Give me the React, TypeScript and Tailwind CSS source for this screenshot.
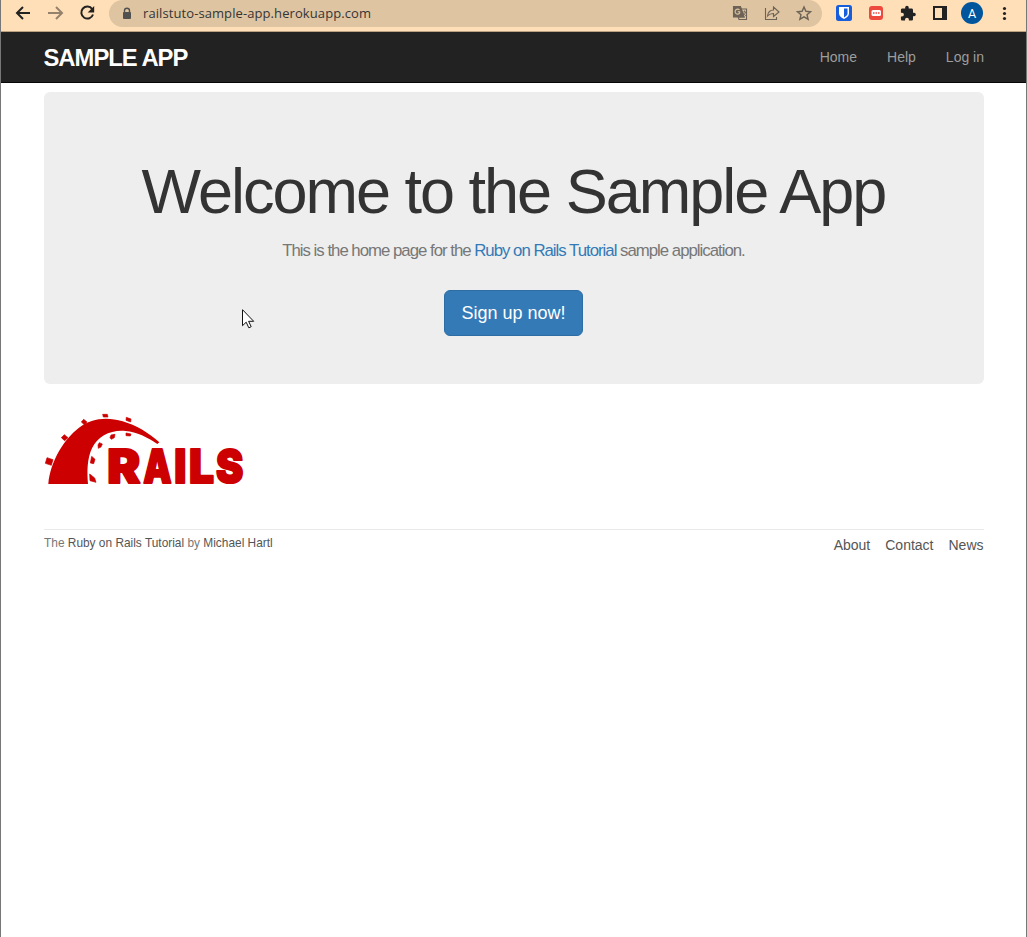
import React from "react";

function BrowserBar() {
  return (
    <div className="flex h-8 shrink-0 items-start border-b border-[#b8a080] bg-[#ffdfb8]">
      <svg width="108" height="28" viewBox="1 0 108 28" fill="none" strokeWidth="2">
        <path d="M30 13H17M23 7l-6 6 6 6" stroke="#222" />
        <path d="M48 13h13.500M56 7l6 6-6 6" stroke="#94826d" />
        <path d="M92.200 9.100a6 6 0 1 0 .8 5.400" stroke="#222" />
        <path d="M94.200 6v6.500h-6.500z" fill="#222" />
      </svg>
      <div className="flex h-[27px] w-[713px] items-center rounded-r-full rounded-bl-full rounded-tl-full bg-[#dfc4a1]">
        <svg className="ml-3" width="12" height="14" viewBox="0 0 12 14">
          <path d="M3.500 6V3.800a2.500 2.500 0 0 1 5 0V6" fill="none" stroke="#50504f" strokeWidth="1.400" />
          <rect x="2" y="5" width="8" height="7" rx="1" fill="#50504f" />
        </svg>
        <span className="ml-[10px] whitespace-nowrap font-['Open_Sans','Noto_Sans',sans-serif] text-[13px] leading-[26px] text-[#333]">
          <svg width="229" height="20" className="block">
            <text x="0" y="14" textLength="228" fill="#353535">railstuto-sample-app.herokuapp.com</text>
          </svg>
        </span>
        <svg className="ml-auto" width="90" height="27" viewBox="732 0 90 27" fill="none" stroke="#6c6256" strokeWidth="1.100">
          <path d="M733.500 6.500h7l3.500 10.500h-10.500z" fill="#6c6256" />
          <path d="M741 9h5.500v10.500h-7.500l-.8-2.500h5.800z" />
          <path d="M739.500 10a2.500 2.500 0 1 0 .2 3v-1.200h-2" stroke="#dfc4a1" />
          <path d="M742.500 12h4M744.500 10.500V12m1 0c0 1.500-1 2.500-2 3m0-2c.5 1 1.500 2 2.500 3" strokeWidth=".8" />
          <path d="M765.500 8v11.500h11V17M767.500 16c.5-3.500 2.500-6 6-6V7l5.500 5-5.500 4.500v-3c-2.500 0-4.500.8-6 2.500z" />
          <path d="M804 7l1.900 4.300 4.600.4-3.500 3 1.100 4.500-4.100-2.400-4.100 2.400 1.100-4.500-3.500-3 4.600-.4z" strokeWidth="1.400" />
        </svg>
      </div>
      <svg width="203" height="27" viewBox="822 0 203 27">
        <rect x="836" y="5" width="16" height="16" rx="2.500" fill="#175ddc" />
        <path d="M839 7h10v6.500c0 2.500-2.500 4.500-5 5.500-2.500-1-5-3-5-5.500z" fill="#fff" />
        <path d="M844 8.500h3.500v5c0 1.500-1.600 3-3.500 3.900z" fill="#175ddc" />
        <rect x="869" y="6" width="14" height="14" rx="3" fill="#ee493d" />
        <rect x="871.500" y="10" width="9.500" height="6" rx="1.500" fill="#fff" />
        <path d="M873 13h1.500m1 0h1.500m1 0h1.500" stroke="#ee493d" strokeWidth="1.500" />
        <path transform="translate(899.500 5) scale(.71)" d="M20.500 11H19V7c0-1.100-.9-2-2-2h-4V3.500a2.500 2.500 0 0 0-5 0V5H4c-1.100 0-2 .9-2 2v3.800h1.500a2.700 2.700 0 0 1 0 5.400H2V20c0 1.100.9 2 2 2h3.800v-1.500a2.700 2.700 0 0 1 5.400 0V22H17c1.100 0 2-.9 2-2v-4h1.500a2.500 2.500 0 0 0 0-5z" fill="#222" />
        <path d="M933 6h14v14h-14zM935 8v10h7V8z" fill="#222" fillRule="evenodd" />
        <circle cx="972" cy="13" r="11" fill="#00559d" />
        <text x="972" y="17.500" textAnchor="middle" fontSize="12.500" fontFamily="Roboto, sans-serif" fill="#fff">A</text>
        <circle cx="1004.500" cy="8.500" r="1.600" fill="#222" />
        <circle cx="1004.500" cy="13.500" r="1.600" fill="#222" />
        <circle cx="1004.500" cy="18.500" r="1.600" fill="#222" />
      </svg>
    </div>
  );
}

const wordmark = [
  { letter: "R", x: 232, width: 99 },
  { letter: "A", x: 340, width: 85 },
  { letter: "I", x: 433, width: 36 },
  { letter: "L", x: 477, width: 75 },
  { letter: "S", x: 558, width: 82 },
];

function RailsLogo() {
  return (
    <svg className="-ml-[14px] block" width="230" height="100" viewBox="0 0 690 300" fill="#c00" aria-label="Rails logo">
      <path d="M55 252C61 183 104 116 146 84C184 55 230 50 278 64C318 76 356 98 388 127L382 132C353 112 320 96 287 93C242 89 204 108 186 145C171 176 171 216 174 252Z" />
      <path strokeWidth="2" stroke="#c00" d="M51 173l18 6-5 17-18-6zM103 104l11 9-10 9-10-9zM161 58l10 8-8 8-9-8zM218 43h14l2 8h-14zM289 52l14 5-1 9-14-5zM288 99l15 3-2 6-13-1zM243 105l12-2-2 10-9 5-4-5zM208 128l9 4-4 9-8 4-1-10zM185 169l10 9-4 13-10-2zM179 222l15 12 4 13-18-5z" />
      {wordmark.map(({ letter, x, width }) => (
        <text
          key={letter}
          x={x}
          y="248.500"
          fontSize="139"
          fontWeight="900"
          fontFamily="Inter, sans-serif"
          stroke="#c00"
          strokeWidth="6"
          strokeLinejoin="round"
          textLength={width}
          lengthAdjust="spacingAndGlyphs"
        >
          {letter}
        </text>
      ))}
    </svg>
  );
}

export default function App() {
  return (
    <div className="relative flex h-[937px] w-[1027px] flex-col overflow-hidden border-x border-[#777] bg-white font-['Liberation_Sans',Arial,sans-serif] text-sm leading-5 text-[#333]">
      <BrowserBar />
      <header className="flex h-[51px] shrink-0 items-center justify-between border-b border-[#080808] bg-[#222] pl-[42.500px] pr-[42px]">
        <a className="pt-px text-[23.8px] font-bold leading-[50px] tracking-[-1px] text-white">SAMPLE APP</a>
        <nav className="flex gap-[30px] text-[#9d9d9d]">
          <a>Home</a>
          <a>Help</a>
          <a>Log in</a>
        </nav>
      </header>
      <main className="pl-[43px] pr-[42px] pt-[9px]">
        <section className="flex h-[292px] flex-col items-center rounded-md bg-[#eee] pr-px pt-[64px] text-center">
          <h1 className="whitespace-nowrap text-[63px] leading-[70px] tracking-[-2px]">Welcome to the Sample App</h1>
          <h2 className="mt-[15px] whitespace-nowrap text-[16.8px] leading-5 tracking-[-1px] text-[#777]">
            This is the home page for the <a className="text-[#337ab7]">Ruby on Rails Tutorial</a> sample application.
          </h2>
          <button className="mt-[29px] h-[46px] w-[139px] rounded-md border border-[#2e6da4] bg-[#337ab7] text-lg leading-6 text-white">
            Sign up now!
          </button>
        </section>
        <div className="mt-4">
          <RailsLogo />
        </div>
        <footer className="mt-[29px] flex justify-between border-t border-[#eaeaea] pr-[0.500px] pt-[5px] text-[#555]">
          <small className="text-[11.900px] leading-4 text-[#777]">
            The <a className="text-[#555]">Ruby on Rails Tutorial</a> by <a className="text-[#555]">Michael Hartl</a>
          </small>
          <nav className="flex gap-[15px]">
            <a>About</a>
            <a>Contact</a>
            <a>News</a>
          </nav>
        </footer>
      </main>
      <svg className="absolute left-[241px] top-[309px]" width="13" height="20" viewBox="0 0 13 20">
        <path d="M.5.7v16l3.700-3.500 2.600 5.600 2.400-1.100-2.600-5.400h5.100z" fill="#fff" stroke="#111" />
      </svg>
    </div>
  );
}
